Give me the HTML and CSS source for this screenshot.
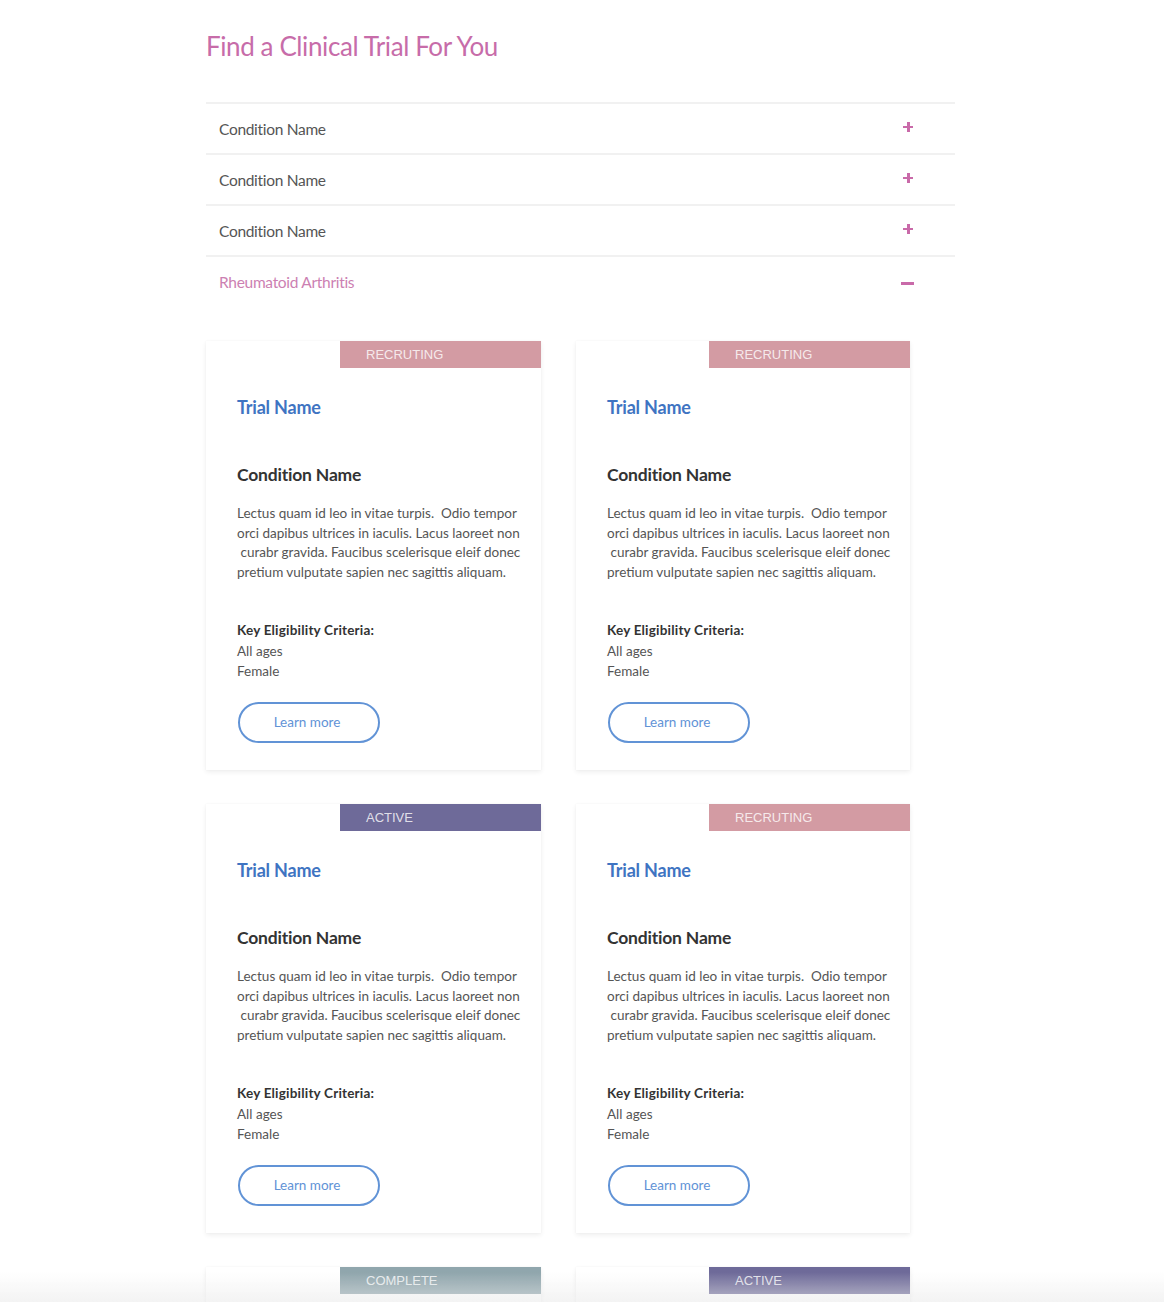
FILE: index.html
```html
<!DOCTYPE html>
<html lang="en">
<head>
<meta charset="utf-8">
<title>Find a Clinical Trial For You</title>
<link rel="stylesheet" href="styles.css">
</head>
<body>
<main class="page">
  <h1 class="title">Find a Clinical Trial For You</h1>

  <section class="accordion">
    <div class="acc-row"><span class="acc-label">Condition Name</span><span class="icon-plus"></span></div>
    <div class="acc-row"><span class="acc-label">Condition Name</span><span class="icon-plus"></span></div>
    <div class="acc-row"><span class="acc-label">Condition Name</span><span class="icon-plus"></span></div>
    <div class="acc-row open"><span class="acc-label">Rheumatoid Arthritis</span><span class="icon-minus"></span></div>
  </section>

  <section class="cards">
    <article class="card">
      <div class="badge recruiting">RECRUTING</div>
      <h2 class="trial">Trial Name</h2>
      <h3 class="cond">Condition Name</h3>
      <p class="desc">Lectus quam id leo in vitae turpis.&nbsp; Odio tempor<br>orci dapibus ultrices in iaculis. Lacus laoreet non<br>&nbsp;curabr gravida. Faucibus scelerisque eleif donec<br>pretium vulputate sapien nec sagittis aliquam.</p>
      <p class="crit"><strong>Key Eligibility Criteria:</strong><br>All ages<br>Female</p>
      <a class="btn" href="#">Learn more</a>
    </article>
    <article class="card">
      <div class="badge recruiting">RECRUTING</div>
      <h2 class="trial">Trial Name</h2>
      <h3 class="cond">Condition Name</h3>
      <p class="desc">Lectus quam id leo in vitae turpis.&nbsp; Odio tempor<br>orci dapibus ultrices in iaculis. Lacus laoreet non<br>&nbsp;curabr gravida. Faucibus scelerisque eleif donec<br>pretium vulputate sapien nec sagittis aliquam.</p>
      <p class="crit"><strong>Key Eligibility Criteria:</strong><br>All ages<br>Female</p>
      <a class="btn" href="#">Learn more</a>
    </article>
    <article class="card">
      <div class="badge active">ACTIVE</div>
      <h2 class="trial">Trial Name</h2>
      <h3 class="cond">Condition Name</h3>
      <p class="desc">Lectus quam id leo in vitae turpis.&nbsp; Odio tempor<br>orci dapibus ultrices in iaculis. Lacus laoreet non<br>&nbsp;curabr gravida. Faucibus scelerisque eleif donec<br>pretium vulputate sapien nec sagittis aliquam.</p>
      <p class="crit"><strong>Key Eligibility Criteria:</strong><br>All ages<br>Female</p>
      <a class="btn" href="#">Learn more</a>
    </article>
    <article class="card">
      <div class="badge recruiting">RECRUTING</div>
      <h2 class="trial">Trial Name</h2>
      <h3 class="cond">Condition Name</h3>
      <p class="desc">Lectus quam id leo in vitae turpis.&nbsp; Odio tempor<br>orci dapibus ultrices in iaculis. Lacus laoreet non<br>&nbsp;curabr gravida. Faucibus scelerisque eleif donec<br>pretium vulputate sapien nec sagittis aliquam.</p>
      <p class="crit"><strong>Key Eligibility Criteria:</strong><br>All ages<br>Female</p>
      <a class="btn" href="#">Learn more</a>
    </article>
    <article class="card">
      <div class="badge complete">COMPLETE</div>
      <h2 class="trial">Trial Name</h2>
      <h3 class="cond">Condition Name</h3>
      <p class="desc">Lectus quam id leo in vitae turpis.&nbsp; Odio tempor<br>orci dapibus ultrices in iaculis. Lacus laoreet non<br>&nbsp;curabr gravida. Faucibus scelerisque eleif donec<br>pretium vulputate sapien nec sagittis aliquam.</p>
      <p class="crit"><strong>Key Eligibility Criteria:</strong><br>All ages<br>Female</p>
      <a class="btn" href="#">Learn more</a>
    </article>
    <article class="card">
      <div class="badge active">ACTIVE</div>
      <h2 class="trial">Trial Name</h2>
      <h3 class="cond">Condition Name</h3>
      <p class="desc">Lectus quam id leo in vitae turpis.&nbsp; Odio tempor<br>orci dapibus ultrices in iaculis. Lacus laoreet non<br>&nbsp;curabr gravida. Faucibus scelerisque eleif donec<br>pretium vulputate sapien nec sagittis aliquam.</p>
      <p class="crit"><strong>Key Eligibility Criteria:</strong><br>All ages<br>Female</p>
      <a class="btn" href="#">Learn more</a>
    </article>
  </section>
</main>
<div class="bottom-fade"></div>
</body>
</html>
```

FILE: styles.css
```css
* { box-sizing: border-box; }

html, body {
  margin: 0;
  padding: 0;
  background: #ffffff;
}

body {
  font-family: Lato, "Noto Sans", "Liberation Sans", sans-serif;
  color: #555;
}

.page {
  width: 749px;
  margin-left: calc(50% - 376px);
  padding-top: 31px;
}

.title {
  margin: 0;
  font-size: 26px;
  line-height: 30px;
  font-weight: 400;
  color: #c76ca9;
  letter-spacing: -0.4px;
}

.accordion {
  margin-top: 41px;
}

.acc-row {
  height: 51px;
  border-top: 2px solid #f1f1f1;
  display: flex;
  align-items: center;
  justify-content: space-between;
  padding: 0 42px 0 13px;
}

.acc-label {
  font-size: 15.5px;
  color: #555;
  letter-spacing: -0.3px;
}

.acc-row.open .acc-label {
  color: #cc7fb2;
}

.acc-row.open {
  padding-top: 0;
}

.icon-plus {
  position: relative;
  width: 10px;
  height: 10px;
  margin-top: -4px;
}
.icon-plus::before,
.icon-plus::after {
  content: "";
  position: absolute;
  background: #c96aa9;
}
.icon-plus::before { left: 0; top: 4px; width: 10px; height: 2.5px; }
.icon-plus::after { left: 4px; top: 0; width: 2.5px; height: 10px; }

.icon-minus {
  width: 13px;
  height: 3px;
  background: #c96aa9;
  margin-right: -1px;
  margin-top: 3px;
}

.cards {
  margin-top: 35px;
  display: grid;
  grid-template-columns: 335px 334px;
  column-gap: 35px;
  row-gap: 34px;
}

.card {
  height: 429px;
  background: #fff;
  box-shadow: 0 2px 5px rgba(0, 0, 0, 0.07), 0 0 1px rgba(0, 0, 0, 0.05);
  padding: 0 31px 27px 31px;
  display: flex;
  flex-direction: column;
  align-items: flex-start;
}

.badge {
  align-self: flex-end;
  margin-right: -31px;
  width: 201px;
  height: 27px;
  line-height: 27px;
  padding-left: 26px;
  font-family: "Liberation Sans", Arial, sans-serif;
  font-size: 13px;
  color: rgba(255, 255, 255, 0.8);
}
.badge.recruiting { background: #d39ba3; }
.badge.active { background: #6e6a99; }
.badge.complete { background: #90a6ad; }

.trial {
  margin: 28px 0 0 0;
  font-size: 18px;
  line-height: 22px;
  font-weight: 700;
  color: #3f74c2;
  letter-spacing: -0.2px;
}

.cond {
  margin: 46px 0 0 0;
  font-size: 17.5px;
  line-height: 22px;
  font-weight: 700;
  color: #333;
  letter-spacing: -0.2px;
}

.desc {
  margin: 18px 0 0 0;
  font-size: 13.5px;
  line-height: 19.5px;
  color: #555;
  white-space: nowrap;
}

.crit {
  margin: 38px 0 0 0;
  font-size: 13.5px;
  line-height: 20.5px;
  color: #555;
}
.crit strong {
  color: #333;
  font-weight: 700;
  letter-spacing: 0.2px;
}

.btn {
  margin-top: 20px;
  margin-left: 1px;
  width: 142px;
  height: 42px;
  border: 2px solid #6193d6;
  border-radius: 21px;
  display: flex;
  align-items: center;
  justify-content: center;
  padding-right: 4px;
  font-size: 13.5px;
  color: #6193d6;
  text-decoration: none;
}

.bottom-fade {
  position: fixed;
  left: 0;
  right: 0;
  bottom: 0;
  height: 30px;
  background: linear-gradient(to bottom, rgba(240, 240, 240, 0), rgba(235, 235, 235, 0.6));
  pointer-events: none;
}
```
